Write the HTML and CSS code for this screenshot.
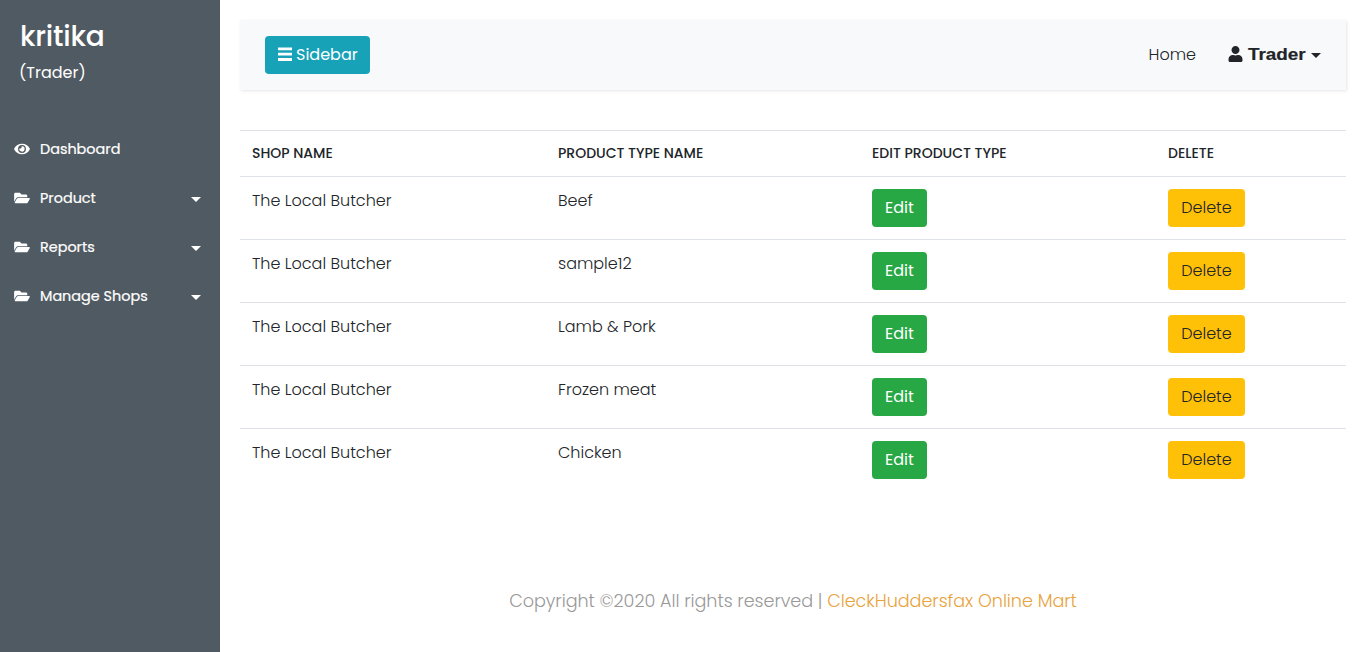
FILE: index.html
```
<!DOCTYPE html>
<html lang="en">
<head>
<meta charset="utf-8">
<title>Trader - Product types</title>
<link rel="stylesheet" href="styles.css">
</head>
<body>
<svg class="defs" width="0" height="0" aria-hidden="true">
  <symbol id="folder" viewBox="0 0 576 512"><path d="M572.694 292.093L500.27 416.248A63.997 63.997 0 0 1 444.989 448H45.025c-18.523 0-30.064-20.093-20.731-36.093l72.424-124.155A64 64 0 0 1 152 256h399.964c18.523 0 30.064 20.093 20.73 36.093zM152 224h328v-48c0-26.51-21.49-48-48-48H272l-64-64H48C21.49 64 0 85.49 0 112v278.046l69.077-118.418C86.214 242.25 117.989 224 152 224z"/></symbol>
  <symbol id="eye" viewBox="0 0 576 512"><path d="M572.52 241.4C518.29 135.59 410.93 64 288 64S57.68 135.64 3.48 241.41a32.35 32.35 0 0 0 0 29.19C57.71 376.41 165.07 448 288 448s230.32-71.64 284.52-177.41a32.35 32.35 0 0 0 0-29.19zM288 400a144 144 0 1 1 144-144 143.93 143.93 0 0 1-144 144zm0-240a95.31 95.31 0 0 0-25.31 3.79 47.85 47.85 0 0 1-66.9 66.9A95.78 95.78 0 1 0 288 160z"/></symbol>
  <symbol id="user" viewBox="0 0 448 512"><path d="M224 256c70.7 0 128-57.3 128-128S294.7 0 224 0 96 57.3 96 128s57.3 128 128 128zm89.6 32h-16.7c-22.2 10.2-46.9 16-72.9 16s-50.6-5.8-72.9-16h-16.7C60.2 288 0 348.2 0 422.4V464c0 26.5 21.5 48 48 48h352c26.5 0 48-21.5 48-48v-41.6c0-74.2-60.2-134.4-134.4-134.4z"/></symbol>
  <symbol id="bars" viewBox="0 0 14 16"><path d="M0 .5h14v2.800H0zM0 5.800h14v2.800H0zM0 11.100h14v2.800H0z"/></symbol>
</svg>
<div class="wrapper">
  <nav class="sidebar">
    <header class="sidebar-header">
      <h3 class="user-name">kritika</h3>
      <p class="user-role">(Trader)</p>
    </header>
    <ul class="menu">
      <li class="menu-item"><svg class="menu-icon"><use href="#eye"/></svg><span class="menu-text">Dashboard</span></li>
      <li class="menu-item"><svg class="menu-icon"><use href="#folder"/></svg><span class="menu-text">Product</span><i class="caret"></i></li>
      <li class="menu-item"><svg class="menu-icon"><use href="#folder"/></svg><span class="menu-text">Reports</span><i class="caret"></i></li>
      <li class="menu-item"><svg class="menu-icon"><use href="#folder"/></svg><span class="menu-text">Manage Shops</span><i class="caret"></i></li>
    </ul>
  </nav>
  <main class="content">
    <div class="navbar">
      <button class="btn btn-info"><svg class="bars"><use href="#bars"/></svg><span>Sidebar</span></button>
      <div class="nav-links">
        <a class="nav-home">Home</a>
        <a class="nav-user"><svg class="user-icon"><use href="#user"/></svg><b class="trader">Trader</b><i class="caret"></i></a>
      </div>
    </div>
    <table class="table">
      <thead><tr><th class="col-shop">SHOP NAME</th><th class="col-type">PRODUCT TYPE NAME</th><th class="col-edit">EDIT PRODUCT TYPE</th><th>DELETE</th></tr></thead>
      <tbody>
        <tr><td>The Local Butcher</td><td>Beef</td><td><button class="btn btn-success">Edit</button></td><td><button class="btn btn-warning">Delete</button></td></tr>
        <tr><td>The Local Butcher</td><td>sample12</td><td><button class="btn btn-success">Edit</button></td><td><button class="btn btn-warning">Delete</button></td></tr>
        <tr><td>The Local Butcher</td><td>Lamb &amp; Pork</td><td><button class="btn btn-success">Edit</button></td><td><button class="btn btn-warning">Delete</button></td></tr>
        <tr><td>The Local Butcher</td><td>Frozen meat</td><td><button class="btn btn-success">Edit</button></td><td><button class="btn btn-warning">Delete</button></td></tr>
        <tr><td>The Local Butcher</td><td>Chicken</td><td><button class="btn btn-success">Edit</button></td><td><button class="btn btn-warning">Delete</button></td></tr>
      </tbody>
    </table>
    <footer class="footer">Copyright ©2020 All rights reserved | <a class="brand">CleckHuddersfax Online Mart</a></footer>
  </main>
</div>
</body>
</html>
```
FILE: styles.css
```
* { box-sizing: border-box; }
body {
  margin: 0;
  font-family: Poppins, Inter, "Open Sans", sans-serif;
  font-size: 16px;
  font-weight: 300;
  line-height: 24px;
  color: #212529;
  background: #fff;
}
.defs { display: none; }
svg { fill: currentColor; flex: none; }
.wrapper { display: flex; height: 652px; overflow: hidden; }
.sidebar { width: 220px; flex: none; background: #505a62; color: #fff; }
.sidebar-header { padding: 20px 20px 0; height: 124px; }
.user-name { margin: 0 0 7px; font-size: 28px; line-height: 34px; font-weight: 500; letter-spacing: -.2px; }
.user-role { margin: 0 0 0 -1px; font-weight: 400; }
.menu { list-style: none; margin: 0; padding: 0; }
.menu-item { display: flex; align-items: center; height: 49px; padding: 0 20px 0 14px; font-size: 14.4px; }
.menu-icon { width: 16px; height: 14px; margin-right: 10px; }
.menu-text { flex: 1; font-weight: 400; -webkit-text-stroke: .2px; }
.caret { width: 0; height: 0; border: 5px solid transparent; border-top-color: currentColor; border-bottom: 0; margin-top: 3px; }
.menu .caret { margin-right: -1px; }
.content { flex: 1; padding: 20px; }
.navbar { display: flex; align-items: center; justify-content: space-between; height: 70px; padding: 0 25px; background: #f8f9fb; box-shadow: 1px 1px 3px rgba(0,0,0,.1); margin-bottom: 40px; }
.btn { display: block; height: 38px; padding: 6px 12px; border: 1px solid transparent; border-radius: 4px; font: 400 16px/24px Poppins, Inter, sans-serif; white-space: nowrap; }
.btn-info { display: flex; align-items: center; width: 105px; background: #17a2b8; color: #fff; }
.bars { width: 14px; height: 16px; margin-right: 4px; }
.btn-success { width: 55px; background: #28a745; color: #fff; }
.btn-warning { width: 77px; background: #ffc107; color: #212529; font-weight: 300; }
.nav-links { display: flex; align-items: center; }
.nav-home { margin-right: 32px; }
.nav-user { display: flex; align-items: center; }
.user-icon { width: 15px; height: 16px; margin: -2px 5px 0 0; }
.trader { width: 58px; font-weight: 700; font-family: "Liberation Sans", Arial, sans-serif; font-size: 17px; -webkit-text-stroke: .2px; transform: scaleX(1.11); transform-origin: left; }
.nav-user .caret { margin-left: 5px; margin-top: 1px; }
.table { width: 1106px; border-collapse: collapse; table-layout: fixed; }
.table th { height: 46px; padding: 0 12px 2px; border-top: 1px solid #dee2e6; font-size: 14px; line-height: 20px; font-weight: 500; text-align: left; }
.table td { height: 63px; padding: 12px; border-top: 1px solid #dee2e6; vertical-align: top; }
.col-shop { width: 306px; }
.col-type { width: 314px; }
.col-edit { width: 296px; }
.footer { margin-top: 97px; text-align: center; font-size: 17.6px; letter-spacing: -.04px; line-height: 24px; color: #999; }
.brand { color: #e8a33d; }
```
